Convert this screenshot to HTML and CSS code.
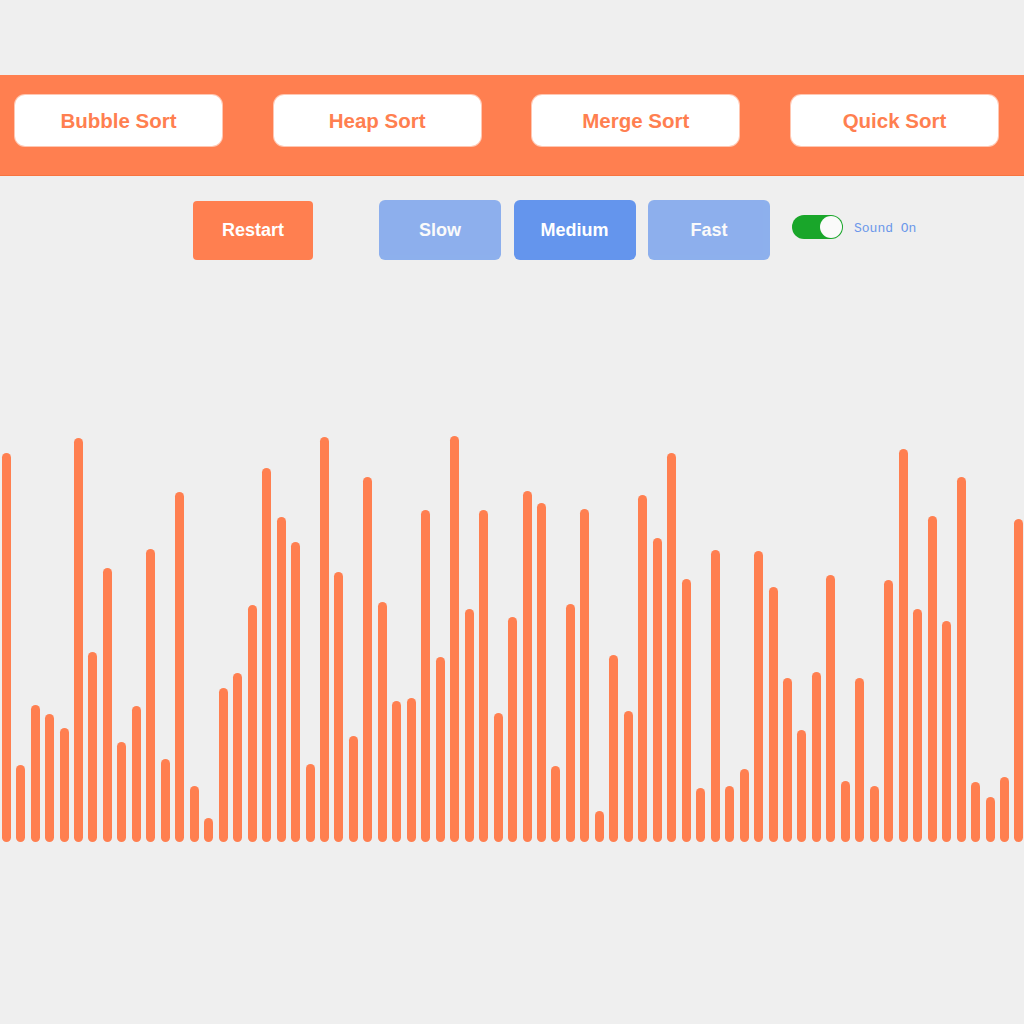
FILE: index.html
```html
<!DOCTYPE html>
<html lang="en">
<head>
<meta charset="utf-8">
<title>Sorting Visualizer</title>
<link rel="stylesheet" href="styles.css">
</head>
<body>
<header class="algo-bar">
  <button class="algo-btn">Bubble Sort</button>
  <button class="algo-btn">Heap Sort</button>
  <button class="algo-btn">Merge Sort</button>
  <button class="algo-btn">Quick Sort</button>
</header>
<section class="controls">
  <button class="restart-btn">Restart</button>
  <div class="speeds">
    <button class="speed-btn">Slow</button>
    <button class="speed-btn active">Medium</button>
    <button class="speed-btn">Fast</button>
  </div>
  <div class="sound">
    <span class="toggle"><span class="knob"></span></span>
    <span class="sound-label">Sound On</span>
  </div>
</section>
<main class="bars">
  <div class="bar" style="height:389px"></div>
  <div class="bar" style="height:77px"></div>
  <div class="bar" style="height:137px"></div>
  <div class="bar" style="height:128px"></div>
  <div class="bar" style="height:114px"></div>
  <div class="bar" style="height:404px"></div>
  <div class="bar" style="height:190px"></div>
  <div class="bar" style="height:274px"></div>
  <div class="bar" style="height:100px"></div>
  <div class="bar" style="height:136px"></div>
  <div class="bar" style="height:293px"></div>
  <div class="bar" style="height:83px"></div>
  <div class="bar" style="height:350px"></div>
  <div class="bar" style="height:56px"></div>
  <div class="bar" style="height:24px"></div>
  <div class="bar" style="height:154px"></div>
  <div class="bar" style="height:169px"></div>
  <div class="bar" style="height:237px"></div>
  <div class="bar" style="height:374px"></div>
  <div class="bar" style="height:325px"></div>
  <div class="bar" style="height:300px"></div>
  <div class="bar" style="height:78px"></div>
  <div class="bar" style="height:405px"></div>
  <div class="bar" style="height:270px"></div>
  <div class="bar" style="height:106px"></div>
  <div class="bar" style="height:365px"></div>
  <div class="bar" style="height:240px"></div>
  <div class="bar" style="height:141px"></div>
  <div class="bar" style="height:144px"></div>
  <div class="bar" style="height:332px"></div>
  <div class="bar" style="height:185px"></div>
  <div class="bar" style="height:406px"></div>
  <div class="bar" style="height:233px"></div>
  <div class="bar" style="height:332px"></div>
  <div class="bar" style="height:129px"></div>
  <div class="bar" style="height:225px"></div>
  <div class="bar" style="height:351px"></div>
  <div class="bar" style="height:339px"></div>
  <div class="bar" style="height:76px"></div>
  <div class="bar" style="height:238px"></div>
  <div class="bar" style="height:333px"></div>
  <div class="bar" style="height:31px"></div>
  <div class="bar" style="height:187px"></div>
  <div class="bar" style="height:131px"></div>
  <div class="bar" style="height:347px"></div>
  <div class="bar" style="height:304px"></div>
  <div class="bar" style="height:389px"></div>
  <div class="bar" style="height:263px"></div>
  <div class="bar" style="height:54px"></div>
  <div class="bar" style="height:292px"></div>
  <div class="bar" style="height:56px"></div>
  <div class="bar" style="height:73px"></div>
  <div class="bar" style="height:291px"></div>
  <div class="bar" style="height:255px"></div>
  <div class="bar" style="height:164px"></div>
  <div class="bar" style="height:112px"></div>
  <div class="bar" style="height:170px"></div>
  <div class="bar" style="height:267px"></div>
  <div class="bar" style="height:61px"></div>
  <div class="bar" style="height:164px"></div>
  <div class="bar" style="height:56px"></div>
  <div class="bar" style="height:262px"></div>
  <div class="bar" style="height:393px"></div>
  <div class="bar" style="height:233px"></div>
  <div class="bar" style="height:326px"></div>
  <div class="bar" style="height:221px"></div>
  <div class="bar" style="height:365px"></div>
  <div class="bar" style="height:60px"></div>
  <div class="bar" style="height:45px"></div>
  <div class="bar" style="height:65px"></div>
  <div class="bar" style="height:323px"></div>
</main>
</body>
</html>
```
FILE: styles.css
```css
html, body {
  margin: 0;
  padding: 0;
  background: #efefef;
  font-family: "Liberation Sans", Arial, sans-serif;
  overflow: hidden;
}

body {
  padding-top: 75px;
  width: 1024px;
  height: 1024px;
  box-sizing: border-box;
}

button {
  font-family: "Liberation Sans", Arial, sans-serif;
  font-weight: bold;
  cursor: pointer;
  border: none;
  padding: 0;
}

.algo-bar {
  height: 101px;
  box-sizing: border-box;
  background: #ff7f50;
  border-bottom: 1px solid #f7743f;
  display: flex;
  align-items: flex-start;
  padding: 20px 0 0 15px;
  gap: 51.67px;
}

.algo-btn {
  width: 207px;
  height: 51px;
  background: #ffffff;
  color: #ff7f50;
  font-size: 20.5px;
  border-radius: 10px;
  box-shadow: 0 0 0 1px rgba(255, 230, 220, 0.7);
}

.controls {
  display: flex;
  align-items: center;
  margin-top: 24px;
  height: 60px;
  padding-left: 193px;
}

.restart-btn {
  width: 120px;
  height: 59px;
  background: #ff7f50;
  color: #ffffff;
  font-size: 18px;
  border-radius: 4px;
}

.speeds {
  display: flex;
  gap: 12.5px;
  margin-left: 66px;
}

.speed-btn {
  width: 122px;
  height: 60px;
  background: #6495ed;
  color: #ffffff;
  font-size: 18px;
  border-radius: 6px;
  opacity: 0.7;
}

.speed-btn.active {
  opacity: 1;
}

.sound {
  display: flex;
  align-items: center;
  margin-left: 22px;
  margin-top: -6px;
}

.toggle {
  position: relative;
  width: 51px;
  height: 24px;
  border-radius: 12px;
  background: #19a62a;
  box-sizing: border-box;
}

.knob {
  position: absolute;
  right: 1px;
  top: 1px;
  width: 22px;
  height: 22px;
  border-radius: 50%;
  background: #fafafa;
  box-sizing: border-box;
}

.sound-label {
  margin-left: 11px;
  margin-top: 3px;
  font-family: "Liberation Mono", "Courier New", monospace;
  font-size: 13px;
  color: #6b97ea;
  white-space: pre;
}

.bars {
  display: flex;
  align-items: flex-end;
  height: 582px;
  padding-left: 1.67px;
  gap: 5.472px;
}

.bar {
  flex: 0 0 9px;
  width: 9px;
  background: #ff7f50;
  border-radius: 4.5px;
}
```
